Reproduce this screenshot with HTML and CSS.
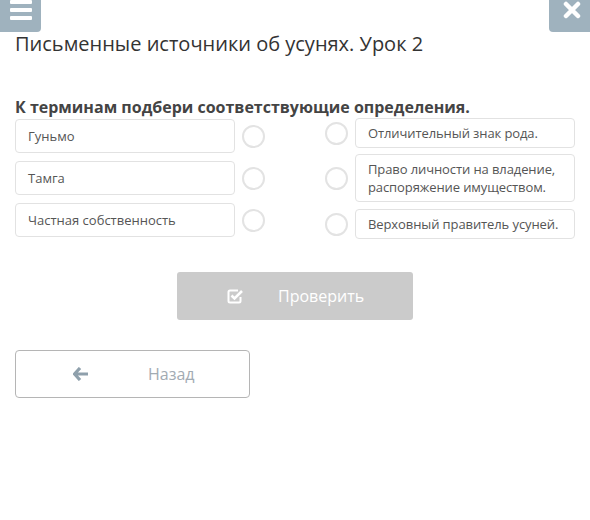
FILE: index.html
```html
<!DOCTYPE html>
<html lang="ru">
<head>
<meta charset="utf-8">
<link rel="stylesheet" href="styles.css">
</head>
<body>
<header class="topbar">
  <div class="tb-btn menu">
    <svg width="22" height="22" viewBox="0 0 22 22"><rect x="0" y="1" width="22" height="4" rx="1" fill="#fff"/><rect x="0" y="9" width="22" height="4" rx="1" fill="#fff"/><rect x="0" y="17" width="22" height="4" rx="1" fill="#fff"/></svg>
  </div>
  <div class="tb-btn close">
    <svg width="18" height="18" viewBox="0 0 18 18"><path d="M3 3 L15 15 M15 3 L3 15" stroke="#fff" stroke-width="4.5" stroke-linecap="round"/></svg>
  </div>
</header>
<main class="page">
  <h1 class="title">Письменные источники об усунях. Урок 2</h1>
  <h2 class="task">К терминам подбери соответствующие определения.</h2>
  <div class="match">
    <div class="col left">
      <div class="row"><div class="item term">Гуньмо</div><span class="dot"></span></div>
      <div class="row"><div class="item term">Тамга</div><span class="dot"></span></div>
      <div class="row"><div class="item term">Частная собственность</div><span class="dot"></span></div>
    </div>
    <div class="col right">
      <div class="row"><span class="dot"></span><div class="item def">Отличительный знак рода.</div></div>
      <div class="row"><span class="dot"></span><div class="item def">Право личности на владение, распоряжение имуществом.</div></div>
      <div class="row"><span class="dot"></span><div class="item def">Верховный правитель усуней.</div></div>
    </div>
  </div>
  <div class="check-wrap">
    <button class="btn-check">
      <svg class="ic-check" width="17" height="16" viewBox="0 0 17 16"><path d="M11 2.5 H3 a1.5 1.5 0 0 0 -1.5 1.5 V13 a1.5 1.5 0 0 0 1.5 1.5 H12 a1.5 1.5 0 0 0 1.5 -1.5 V9" fill="none" stroke="#fff" stroke-width="2"/><path d="M4.5 7.5 L7.5 10.5 L15 3" fill="none" stroke="#fff" stroke-width="2.6"/></svg>
      <span>Проверить</span>
    </button>
  </div>
  <button class="btn-back">
    <svg class="ic-arrow" width="16" height="14" viewBox="0 0 16 14"><path d="M7 1 L1.5 7 L7 13 M2 7 H15" fill="none" stroke="#8fa0ac" stroke-width="3.2" stroke-linejoin="round"/></svg>
    <span>Назад</span>
  </button>
</main>
</body>
</html>
```
FILE: styles.css
```css
* { box-sizing: border-box; }
html, body { margin: 0; padding: 0; background: #fff; }
body { font-family: "Open Sans", "Noto Sans", sans-serif; color: #333; }

.topbar { display: flex; justify-content: space-between; height: 32px; }
.tb-btn { width: 41px; height: 32px; background: #9fb2be; display: flex; justify-content: center; }
.menu { border-bottom-right-radius: 4px; align-items: flex-start; padding-top: 0; }
.menu svg { margin-top: -1px; }
.close { border-bottom-left-radius: 4px; align-items: flex-start; padding-top: 1px; padding-left: 4px; }

.page { padding: 0 15px; }
.title { margin: 0; font-size: 20px; font-weight: 400; line-height: 24px; color: #333; }
.task { margin: 41px 0 0; font-size: 16px; font-weight: 700; line-height: 20px; color: #444; }

.match { display: flex; justify-content: space-between; margin-top: 1px; }
.col { display: flex; flex-direction: column; }
.left { gap: 8px; padding-top: 1px; }
.right { gap: 6px; }
.row { display: flex; align-items: center; }
.left .row { gap: 7px; }
.right .row { gap: 7px; }
.item { width: 220px; border: 1px solid #e2e2e2; border-radius: 4px; font-size: 13px; color: #555; background: #fff; }
.term { height: 34px; padding: 0 12px; display: flex; align-items: center; }
.def { padding: 5px 12px; line-height: 18px; letter-spacing: -0.1px; }
.right .row:last-child { margin-top: 1px; }
.dot { width: 23px; height: 23px; border: 2px solid #e3e3e3; border-radius: 50%; flex: none; }

.check-wrap { display: flex; justify-content: center; margin-top: 33px; }
.btn-check { width: 236px; height: 48px; border: none; border-radius: 3px; background: #cbcbcb; color: #fff; font-family: inherit; font-size: 16px; display: flex; align-items: center; padding: 0 0 0 50px; }
.btn-check .ic-check { margin-right: 34px; }

.btn-back { margin-top: 30px; width: 235px; height: 48px; border: 1px solid #b5b5b5; border-radius: 4px; background: #fff; font-family: inherit; font-size: 16px; color: #a2abb3; display: flex; align-items: center; padding: 0 0 0 57px; }
.btn-back .ic-arrow { margin-right: 59px; }
```
